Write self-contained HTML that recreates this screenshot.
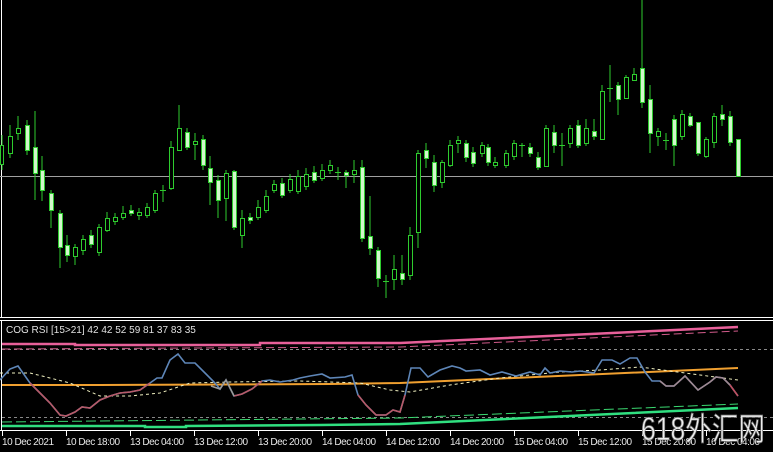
<!DOCTYPE html>
<html><head><meta charset="utf-8"><style>
html,body{margin:0;padding:0;background:#000;width:773px;height:452px;overflow:hidden}
svg{display:block}
</style></head><body>
<svg width="773" height="452" xmlns="http://www.w3.org/2000/svg" font-family="Liberation Sans, sans-serif">
<rect width="773" height="452" fill="#000"/>
<line x1="1.5" y1="0" x2="1.5" y2="318" stroke="#fff"/>
<line x1="0" y1="317.5" x2="773" y2="317.5" stroke="#fff"/>
<line x1="0" y1="320.5" x2="773" y2="320.5" stroke="#fff"/>
<line x1="1.5" y1="320" x2="1.5" y2="431" stroke="#fff"/>
<line x1="0" y1="430.5" x2="773" y2="430.5" stroke="#fff"/>
<line x1="0" y1="176.5" x2="773" y2="176.5" stroke="#a0a0a0"/>
<g stroke="#2ecc2e" stroke-width="1" shape-rendering="crispEdges">
<path fill="none" d="M2 135V170M10 125V158M18 116V140M27 120V155M35 111V200M42 156V201M51 190V228M60 210V268M67 235V262M75 244V265M83 235V255M91 230V248M99 224V256M107 212V232M115 213V225M123 206V220M131 205V216M139 208V220M147 203V218M155 190V213M163 185V202M171 141V190M179 105V150M187 128V150M195 133V160M203 135V170M210 156V205M218 175V218M226 170V221M234 170V230M242 210V248M250 213V224M258 200V220M266 190V213M274 180V193M282 178V198M290 174V193M298 170V194M306 168V190M314 166V183M322 164V181M330 160V174M338 167V180M346 170V188M354 160V183M362 160V242M370 196V255M378 247V287M386 275V298M394 255V290M402 255V285M410 227V280M418 150V248M426 143V168M434 155V192M442 160V188M450 140V167M458 136V153M466 140V162M473 147V167M482 142V157M488 144V166M495 157V168M506 150V168M514 140V160M522 143V157M530 143V157M538 152V170M546 125V167M554 125V153M562 133V166M570 125V148M578 120V148M586 119V146M594 119V140M602 85V140M610 65V102M618 82V115M626 75V99M634 68V81M642 0V108M650 85V153M658 128V146M666 133V150M674 115V166M682 110V140M690 113V127M698 122V156M706 137V158M714 113V148M722 105V126M730 111V146M738 139V176"/>
<g fill="#000">
<rect x="0.5" y="145.5" width="3" height="19"/><rect x="8.5" y="136.5" width="4" height="17"/><rect x="16.5" y="128.5" width="4" height="5"/>
<rect x="73.5" y="247.5" width="4" height="9"/><rect x="81.5" y="239.5" width="4" height="11"/><rect x="97.5" y="227.5" width="4" height="25"/>
<rect x="105.5" y="218.5" width="4" height="12"/><rect x="113.5" y="217.5" width="4" height="4"/><rect x="121.5" y="213.5" width="4" height="4"/>
<rect x="137.5" y="212.5" width="4" height="3"/><rect x="145.5" y="207.5" width="4" height="8"/><rect x="153.5" y="193.5" width="4" height="17"/>
<rect x="169.5" y="147.5" width="4" height="41"/><rect x="177.5" y="128.5" width="4" height="22"/><rect x="193.5" y="141.5" width="4" height="3"/>
<rect x="224.5" y="173.5" width="4" height="25"/><rect x="240.5" y="218.5" width="4" height="17"/><rect x="256.5" y="207.5" width="4" height="10"/>
<rect x="264.5" y="196.5" width="4" height="14"/><rect x="272.5" y="184.5" width="4" height="6"/><rect x="288.5" y="179.5" width="4" height="11"/>
<rect x="296.5" y="176.5" width="4" height="15"/><rect x="304.5" y="174.5" width="4" height="12"/><rect x="320.5" y="170.5" width="4" height="8"/>
<rect x="328.5" y="165.5" width="4" height="5"/><rect x="352.5" y="170.5" width="4" height="4"/><rect x="392.5" y="269.5" width="4" height="10"/>
<rect x="408.5" y="235.5" width="4" height="40"/><rect x="416.5" y="153.5" width="4" height="79"/><rect x="440.5" y="162.5" width="4" height="20"/>
<rect x="448.5" y="145.5" width="4" height="20"/><rect x="456.5" y="140.5" width="4" height="3"/><rect x="480.5" y="145.5" width="4" height="8"/>
<rect x="493.5" y="162.5" width="4" height="3"/><rect x="504.5" y="153.5" width="4" height="12"/><rect x="512.5" y="143.5" width="4" height="13"/>
<rect x="544.5" y="128.5" width="4" height="38"/><rect x="568.5" y="128.5" width="4" height="15"/><rect x="584.5" y="128.5" width="4" height="15"/>
<rect x="600.5" y="91.5" width="4" height="48"/><rect x="624.5" y="77.5" width="4" height="21"/><rect x="632.5" y="74.5" width="4" height="6"/>
<rect x="656.5" y="131.5" width="4" height="5"/><rect x="680.5" y="114.5" width="4" height="22"/><rect x="704.5" y="139.5" width="4" height="17"/>
<rect x="712.5" y="116.5" width="4" height="26"/>
</g>
<g fill="#d2f8cc">
<rect x="25.5" y="125.5" width="4" height="25"/><rect x="33.5" y="147.5" width="4" height="26"/><rect x="40.5" y="170.5" width="4" height="20"/>
<rect x="49.5" y="193.5" width="4" height="17"/><rect x="58.5" y="213.5" width="4" height="34"/><rect x="65.5" y="245.5" width="4" height="10"/>
<rect x="89.5" y="235.5" width="4" height="9"/><rect x="129.5" y="210.5" width="4" height="3"/><rect x="185.5" y="132.5" width="4" height="15"/>
<rect x="201.5" y="139.5" width="4" height="26"/><rect x="208.5" y="168.5" width="4" height="14"/><rect x="216.5" y="180.5" width="4" height="20"/>
<rect x="232.5" y="171.5" width="4" height="56"/><rect x="248.5" y="217.5" width="4" height="3"/><rect x="280.5" y="183.5" width="4" height="12"/>
<rect x="312.5" y="172.5" width="4" height="8"/><rect x="344.5" y="172.5" width="4" height="3"/><rect x="360.5" y="167.5" width="4" height="71"/>
<rect x="368.5" y="236.5" width="4" height="12"/><rect x="376.5" y="250.5" width="4" height="28"/><rect x="400.5" y="273.5" width="4" height="6"/>
<rect x="424.5" y="150.5" width="4" height="8"/><rect x="432.5" y="162.5" width="4" height="23"/><rect x="464.5" y="143.5" width="4" height="14"/>
<rect x="471.5" y="152.5" width="4" height="11"/><rect x="486.5" y="147.5" width="4" height="15"/><rect x="528.5" y="147.5" width="4" height="6"/>
<rect x="536.5" y="157.5" width="4" height="10"/><rect x="552.5" y="132.5" width="4" height="13"/><rect x="576.5" y="125.5" width="4" height="20"/>
<rect x="592.5" y="131.5" width="4" height="5"/><rect x="616.5" y="85.5" width="4" height="14"/><rect x="640.5" y="68.5" width="4" height="34"/>
<rect x="648.5" y="99.5" width="4" height="34"/><rect x="672.5" y="119.5" width="4" height="26"/><rect x="688.5" y="116.5" width="4" height="9"/>
<rect x="696.5" y="122.5" width="4" height="31"/><rect x="720.5" y="114.5" width="4" height="5"/><rect x="728.5" y="116.5" width="4" height="26"/>
<rect x="736.5" y="139.5" width="4" height="37"/>
</g>
<path fill="none" d="M160 190.5H166M335 172.5H341M383 281.5H389M519 145.5H525M559 145.5H565M607 88.5H613M663 140.5H669"/>
</g>
<text x="6" y="333" font-size="10" fill="#e0e0e0">COG RSI [15&gt;21] 42 42 52 59 81 37 83 35</text>
<line x1="2" y1="349.5" x2="773" y2="349.5" stroke="#888" stroke-dasharray="3,3"/>
<line x1="2" y1="417.5" x2="773" y2="417.5" stroke="#888" stroke-dasharray="3,3"/>
<polyline fill="none" stroke="#e8609a" stroke-width="2.5" points="2,344 75,344 75,345 260,345 260,343 400,343 738,327"/>
<polyline fill="none" stroke="#d05a8a" stroke-width="1" stroke-dasharray="8,4" points="2,349 400,347 738,331"/>
<polyline fill="none" stroke="#f0a030" stroke-width="2" points="2,385 100,385 330,384 400,383 738,368"/>
<polyline fill="none" stroke="#3ad870" stroke-width="1" stroke-dasharray="10,4" points="2,422 400,418 738,404"/>
<polyline fill="none" stroke="#30e080" stroke-width="2.5" points="2,426 145,426 145,427 186,427 186,426 320,425 400,424 738,408"/>
<polyline fill="none" stroke="#f0f0c0" stroke-width="1" stroke-dasharray="3,3" points="0,373 30,373 70,383 100,396 130,396 160,393 190,383 230,382 300,381 360,383 390,390 410,392 450,385 500,378 560,372 600,370 640,367 700,375 738,380"/>
<polyline fill="none" stroke="#5e86b8" stroke-width="1.6" points="0,380 10,369 18,366 30,383 40,393 50,403 60,415 66,416 75,412 82,407 90,408 100,400 110,396 120,393 130,392 140,390 150,383 157,378 162,378 170,360 178,354 185,363 195,363 205,373 215,383 220,389 226,380 234,396 242,394 252,389 262,381 270,380 280,382 293,380 300,378 310,376 322,374 330,378 345,377 352,375 358,395 366,405 376,415 386,415 393,410 400,412 405,395 411,368 420,368 428,377 440,370 452,366 460,368 466,371 480,370 490,375 502,372 516,376 530,372 540,375 545,368 550,373 560,371 572,372 580,371 594,373 602,360 612,360 620,364 630,358 637,358 645,372 652,381 660,381 666,386 674,386 685,376 698,390 710,382 716,377 723,378 730,385 738,396"/>
<polyline fill="none" stroke="#b85a68" stroke-width="1.6" points="30,383 40,393 50,403 60,415 66,416 75,412 82,407 90,408 100,400 110,396 120,393 130,392 140,390 150,383"/>
<polyline fill="none" stroke="#b85a68" stroke-width="1.6" points="234,396 242,394 252,389 262,381"/>
<polyline fill="none" stroke="#b85a68" stroke-width="1.6" points="358,395 366,405 376,415 386,415 393,410 400,412 405,395"/>
<polyline fill="none" stroke="#a08890" stroke-width="1.6" points="660,381 666,386 674,386 685,376 698,390 710,382 716,377 723,378 730,385"/>
<polyline fill="none" stroke="#c05060" stroke-width="1.6" points="730,385 738,396"/>
<polyline fill="none" stroke="#9a9a9a" stroke-width="1.6" points="211,386 220,389 226,380 234,396"/>
<path stroke="#fff" d="M2.5 431V436M66.5 431V436M130.5 431V436M194.5 431V436M258.5 431V436M322.5 431V436M386.5 431V436M450.5 431V436M514.5 431V436M578.5 431V436M642.5 431V436M706.5 431V436"/>
<g font-size="10" fill="#e8e8e8">
<text x="2" y="445" textLength="52">10 Dec 2021</text><text x="66" y="445" textLength="54">10 Dec 18:00</text><text x="130" y="445" textLength="54">13 Dec 04:00</text>
<text x="194" y="445" textLength="54">13 Dec 12:00</text><text x="258" y="445" textLength="54">13 Dec 20:00</text><text x="322" y="445" textLength="54">14 Dec 04:00</text>
<text x="386" y="445" textLength="54">14 Dec 12:00</text><text x="450" y="445" textLength="54">14 Dec 20:00</text><text x="514" y="445" textLength="54">15 Dec 04:00</text>
<text x="578" y="445" textLength="54">15 Dec 12:00</text><text x="642" y="445" textLength="54">15 Dec 20:00</text><text x="706" y="445" textLength="54">16 Dec 04:00</text>
</g>
<text x="641" y="440" font-size="32" fill="#eeeeee" stroke="#666" stroke-width="0.8" textLength="124" lengthAdjust="spacingAndGlyphs" font-family="Liberation Sans, Noto Sans CJK SC, sans-serif">618外汇网</text>
</svg>
</body></html>
